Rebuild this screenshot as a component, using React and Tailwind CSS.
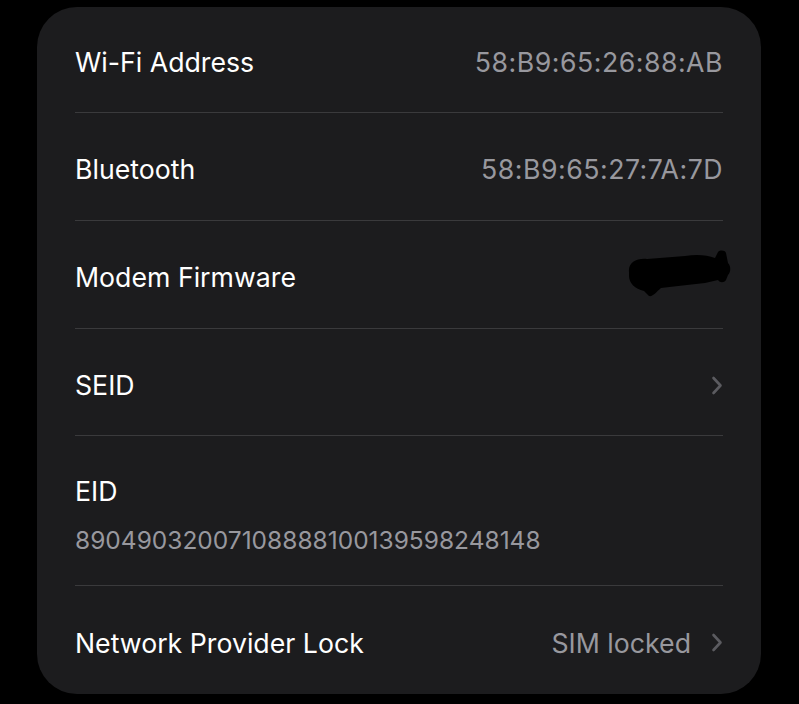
const font = { fontFamily: "Inter, 'Noto Sans', sans-serif" };

function Chevron() {
  return (
    <svg width="12" height="19" viewBox="0 0 12 19" className="shrink-0">
      <path
        d="M2.5 2 L9.5 9.5 L2.5 17"
        fill="none"
        stroke="#5b5b60"
        strokeWidth="2.6"
        strokeLinecap="round"
        strokeLinejoin="round"
      />
    </svg>
  );
}

function Row({ label, value, chevron, children, last, height, mono }) {
  return (
    <div className="px-[38px]">
      <div
        className={`flex items-center justify-between pt-[6px] ${height} ${
          last ? "" : "border-b border-[#3a3a3c]"
        }`}
      >
        <span className="text-white">{label}</span>
        <div className="flex items-center gap-[20px] text-[#98989e]">
          {value && (
            <span className={mono ? "tracking-[0.5px]" : ""}>{value}</span>
          )}
          {children}
          {chevron && <Chevron />}
        </div>
      </div>
    </div>
  );
}

// redaction scribble over the firmware version
function Redacted() {
  return (
    <svg width="110" height="50" viewBox="0 0 110 50" className="-mr-[12px] -mt-[6px]">
      <path
        d="M4 22 C3 13 11 8 22 9 L60 6 C72 4 82 5 90 8 L93 2 C95 0 100 0 101 3 L103 13 C106 16 106 22 103 25 L101 30 C99 33 95 33 93 30 L80 33 C65 35 50 36 36 38 C31 42 28 47 24 46 L19 41 C10 39 4 33 4 26 Z"
        fill="#000"
      />
    </svg>
  );
}

export default function App() {
  return (
    <div
      className="h-[704px] w-[799px] bg-black pt-[7px] pl-[37px] text-[26.7px] leading-none"
      style={font}
    >
      <div className="w-[724px] h-[687px] overflow-hidden rounded-[40px] bg-[#1c1c1e]">
        <Row height="h-[106px]" label="Wi-Fi Address" value="58:B9:65:26:88:AB" mono />
        <Row height="h-[108px]" label="Bluetooth" value="58:B9:65:27:7A:7D" mono />
        <Row height="h-[108px]" label="Modem Firmware">
          <Redacted />
        </Row>
        <Row height="h-[107px]" label="SEID" chevron />
        <div className="px-[38px]">
          <div className="h-[150px] border-b border-[#3a3a3c] pt-[42px]">
            <div className="text-white">EID</div>
            <div className="mt-[23px] text-[24.5px] text-[#98989e]">
              89049032007108888100139598248148
            </div>
          </div>
        </div>
        <Row height="h-[108px]" last label="Network Provider Lock" value="SIM locked" chevron />
      </div>
    </div>
  );
}
